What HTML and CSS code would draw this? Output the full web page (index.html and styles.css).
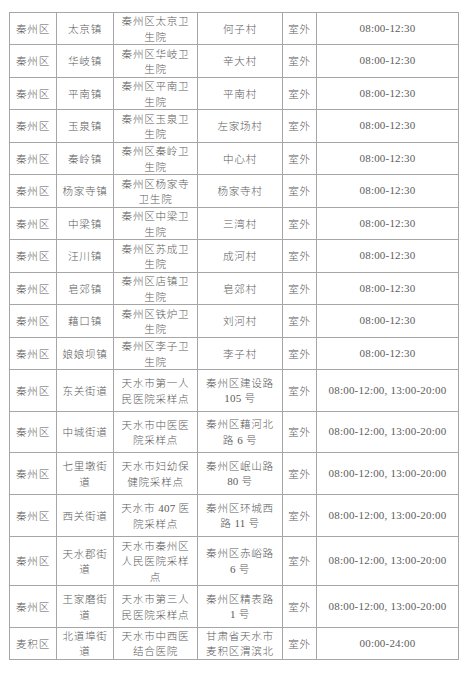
FILE: index.html
```html
<!DOCTYPE html>
<html lang="zh">
<head>
<meta charset="utf-8">
<title>核酸采样点</title>
<link rel="stylesheet" href="styles.css">
</head>
<body>
<table class="sites">
  <colgroup>
    <col class="c-area"><col class="c-town"><col class="c-org"><col class="c-addr"><col class="c-type"><col class="c-time">
  </colgroup>
  <tbody>
    <tr class="r-a"><td>秦州区</td><td>太京镇</td><td>秦州区太京卫<br>生院</td><td>何子村</td><td>室外</td><td class="num">08:00-12:30</td></tr>
    <tr class="r-b"><td>秦州区</td><td>华岐镇</td><td>秦州区华岐卫<br>生院</td><td>辛大村</td><td>室外</td><td class="num">08:00-12:30</td></tr>
    <tr class="r-a"><td>秦州区</td><td>平南镇</td><td>秦州区平南卫<br>生院</td><td>平南村</td><td>室外</td><td class="num">08:00-12:30</td></tr>
    <tr class="r-b"><td>秦州区</td><td>玉泉镇</td><td>秦州区玉泉卫<br>生院</td><td>左家场村</td><td>室外</td><td class="num">08:00-12:30</td></tr>
    <tr class="r-a"><td>秦州区</td><td>秦岭镇</td><td>秦州区秦岭卫<br>生院</td><td>中心村</td><td>室外</td><td class="num">08:00-12:30</td></tr>
    <tr class="r-b"><td>秦州区</td><td>杨家寺镇</td><td>秦州区杨家寺<br>卫生院</td><td>杨家寺村</td><td>室外</td><td class="num">08:00-12:30</td></tr>
    <tr class="r-a"><td>秦州区</td><td>中梁镇</td><td>秦州区中梁卫<br>生院</td><td>三湾村</td><td>室外</td><td class="num">08:00-12:30</td></tr>
    <tr class="r-b"><td>秦州区</td><td>汪川镇</td><td>秦州区苏成卫<br>生院</td><td>成河村</td><td>室外</td><td class="num">08:00-12:30</td></tr>
    <tr class="r-a"><td>秦州区</td><td>皂郊镇</td><td>秦州区店镇卫<br>生院</td><td>皂郊村</td><td>室外</td><td class="num">08:00-12:30</td></tr>
    <tr class="r-b"><td>秦州区</td><td>藉口镇</td><td>秦州区铁炉卫<br>生院</td><td>刘河村</td><td>室外</td><td class="num">08:00-12:30</td></tr>
    <tr class="r-a"><td>秦州区</td><td>娘娘坝镇</td><td>秦州区李子卫<br>生院</td><td>李子村</td><td>室外</td><td class="num">08:00-12:30</td></tr>
    <tr class="r-c"><td>秦州区</td><td>东关街道</td><td>天水市第一人<br>民医院采样点</td><td>秦州区建设路<br><span class="num">105</span> 号</td><td>室外</td><td class="num">08:00-12:00, 13:00-20:00</td></tr>
    <tr class="r-d"><td>秦州区</td><td>中城街道</td><td>天水市中医医<br>院采样点</td><td>秦州区藉河北<br>路 <span class="num">6</span> 号</td><td>室外</td><td class="num">08:00-12:00, 13:00-20:00</td></tr>
    <tr class="r-c"><td>秦州区</td><td>七里墩街<br>道</td><td>天水市妇幼保<br>健院采样点</td><td>秦州区岷山路<br><span class="num">80</span> 号</td><td>室外</td><td class="num">08:00-12:00, 13:00-20:00</td></tr>
    <tr class="r-c"><td>秦州区</td><td>西关街道</td><td>天水市 <span class="num">407</span> 医<br>院采样点</td><td>秦州区环城西<br>路 <span class="num">11</span> 号</td><td>室外</td><td class="num">08:00-12:00, 13:00-20:00</td></tr>
    <tr class="r-e"><td>秦州区</td><td>天水郡街<br>道</td><td>天水市秦州区<br>人民医院采样<br>点</td><td>秦州区赤峪路<br><span class="num">6</span> 号</td><td>室外</td><td class="num">08:00-12:00, 13:00-20:00</td></tr>
    <tr class="r-c"><td>秦州区</td><td>王家磨街<br>道</td><td>天水市第三人<br>民医院采样点</td><td>秦州区精表路<br><span class="num">1</span> 号</td><td>室外</td><td class="num">08:00-12:00, 13:00-20:00</td></tr>
    <tr class="r-f"><td>麦积区</td><td>北道埠街<br>道</td><td>天水市中西医<br>结合医院</td><td>甘肃省天水市<br>麦积区渭滨北</td><td>室外</td><td class="num">00:00-24:00</td></tr>
  </tbody>
</table>
</body>
</html>
```

FILE: styles.css
```css
html, body {
  background: #ffffff;
}
body {
  margin: 0;
  padding: 12px 0 0 9px;
  font-family: "Noto Sans CJK SC", "Noto Sans", sans-serif;
  font-size: 10.6px;
  color: #5c5c5c;
}
.sites {
  border-collapse: collapse;
  table-layout: fixed;
  width: 449px;
  border: 1px solid #8f8f8f;
}
.sites td {
  border: 1px solid #a6a6a6;
  padding: 0 2px;
  text-align: center;
  vertical-align: middle;
  line-height: 15.4px;
  letter-spacing: 0.7px;
  white-space: nowrap;
  overflow: hidden;
  font-weight: 300;
}
.c-area { width: 47px; }
.c-town { width: 57px; }
.c-org  { width: 84px; }
.c-addr { width: 85px; }
.c-type { width: 34px; }
.c-time { width: 142px; }
.num {
  font-family: "Liberation Serif", "DejaVu Serif", serif;
  font-size: 11px;
  letter-spacing: 0.2px;
  font-weight: 400;
}
.sites td.num { letter-spacing: 0.2px; }
.r-a { height: 32px; }
.r-b { height: 33px; }
.r-c { height: 42px; }
.r-d { height: 41px; }
.r-e { height: 49px; }
.r-f { height: 31px; }
```
